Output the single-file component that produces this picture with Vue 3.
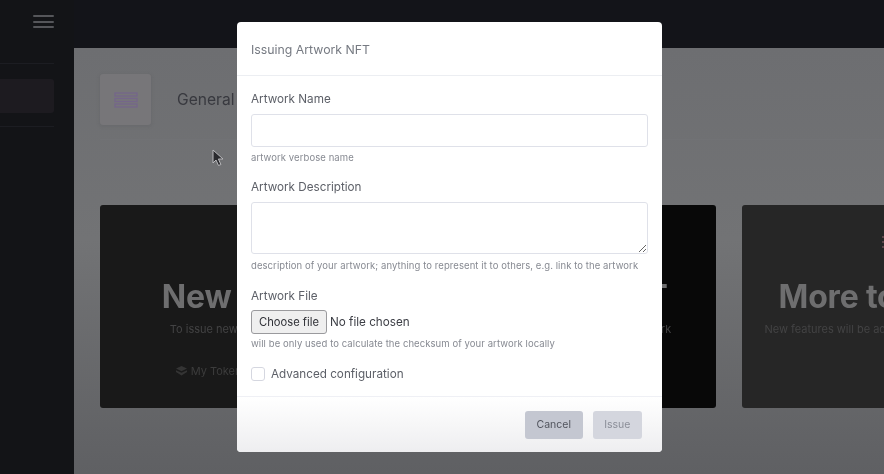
<script setup>
const cards = [
  { tone: 'tone-a', title: 'New Token', text: 'To issue new tokens for yours', link: 'My Tokens and Issuance' },
  { tone: 'tone-b', title: 'Artwork NFT', text: 'To issue an NFT of your unique artwork', link: 'My NFTs' },
  { tone: 'tone-c', title: 'More to come!', text: 'New features will be added here at a future date', link: '' }
]
</script>

<template>
  <div class="page">
    <aside class="sidebar">
      <div class="burger"><i></i><i></i><i></i></div>
      <div class="nav">
        <div class="nav-item"></div>
      </div>
    </aside>

    <div class="content">
      <header class="topbar"></header>
      <main class="main">
        <div class="title-row">
          <div class="tile">
            <svg width="24" height="16" viewBox="0 0 24 16" fill="none" stroke="#75668a" stroke-width="1.3">
              <rect x="1" y="1" width="22" height="3" />
              <rect x="1" y="6.5" width="22" height="3" />
              <rect x="1" y="12" width="22" height="3" />
            </svg>
          </div>
          <h1 class="title">General</h1>
        </div>
        <section class="cards">
          <article v-for="c in cards" :key="c.title" class="card" :class="c.tone">
            <svg class="card-icon" width="20" height="16" viewBox="0 0 20 16" fill="none" stroke="#5a4448" stroke-width="2">
              <path d="M2 3h16M2 8h16M2 13h16" />
            </svg>
            <h2 class="card-title">{{ c.title }}</h2>
            <p class="card-text">{{ c.text }}</p>
            <a v-if="c.link" class="card-link">
              <svg width="11" height="10" viewBox="0 0 11 10" fill="#343434"><path d="M5.5 0 11 2.6 5.5 5.2 0 2.6zM0 4.2l5.5 2.6L11 4.2V6L5.500 9.400 0 6z" /></svg>
              {{ c.link }}
            </a>
          </article>
        </section>
      </main>
    </div>

    <svg class="cursor" width="12" height="18" viewBox="0 0 12 18">
      <path d="M1 1v13l3-3 2.500 5.500 2.400-1L6.400 10H11z" fill="#2a2a2e" stroke="#b9b9bc" stroke-width="1" />
    </svg>

    <div class="modal">
      <div class="modal-head">Issuing Artwork NFT</div>
      <form class="modal-body" @submit.prevent>
        <div class="field name-field">
          <label class="label">Artwork Name</label>
          <input class="control name" type="text" />
          <small class="hint">artwork verbose name</small>
        </div>
        <div class="field desc-field">
          <label class="label">Artwork Description</label>
          <textarea class="control desc"></textarea>
          <small class="hint">description of your artwork; anything to represent it to others, e.g. link to the artwork</small>
        </div>
        <div class="field file-field">
          <label class="label">Artwork File</label>
          <div class="file-row">
            <button class="file-btn" type="button">Choose file</button>
            <span class="file-name">No file chosen</span>
          </div>
          <small class="hint">will be only used to calculate the checksum of your artwork locally</small>
        </div>
        <label class="check">
          <input class="box" type="checkbox" />
          <span>Advanced configuration</span>
        </label>
      </form>
      <div class="modal-foot">
        <button class="btn cancel" type="button">Cancel</button>
        <button class="btn issue" type="button" disabled>Issue</button>
      </div>
    </div>
  </div>
</template>

<style>
html, body { margin: 0; background: #131417; overflow: hidden; }
</style>

<style scoped>
* { box-sizing: border-box; }
.page {
  position: relative;
  display: flex;
  width: 884px;
  height: 474px;
  overflow: hidden;
  font-family: Inter, "Liberation Sans", sans-serif;
  background: #131417;
  filter: blur(0.45px);
}
.sidebar {
  flex: 0 0 74px;
  padding: 15px 20px 0 0;
  background: #131417;
}
.burger {
  display: flex;
  flex-direction: column;
  align-items: flex-end;
  gap: 3.5px;
  height: 48px;
}
.burger i {
  display: block;
  width: 21px;
  height: 2px;
  border-radius: 1px;
  background: #55565a;
}
.nav {
  border-top: 1px solid #1c1d22;
  border-bottom: 1px solid #1c1d22;
  padding: 15px 0 14px;
  height: 64px;
}
.nav-item {
  height: 34px;
  border-radius: 0 3px 3px 0;
  background: #1d1b20;
}
.content {
  flex: 1;
  min-width: 0;
  display: flex;
  flex-direction: column;
}
.topbar {
  flex: 0 0 48px;
  background: #131419;
}
.main {
  flex: 1;
  padding: 26px 0 0 26px;
  background: linear-gradient(#6d6e71, #727375 45%, #5f6063);
}
.title-row {
  display: flex;
  align-items: center;
  gap: 26px;
  padding-bottom: 14px;
  border-bottom: 1px solid #717275;
  margin-bottom: 65px;
}
.tile {
  width: 51px;
  height: 51px;
  display: flex;
  align-items: center;
  justify-content: center;
  border-radius: 3px;
  background: #777679;
  box-shadow: 0 1px 4px rgba(60, 60, 65, 0.15);
}
.title {
  margin: 0;
  font-size: 15.6px;
  font-weight: 400;
  color: #38393f;
}
.cards {
  display: flex;
  gap: 26px;
}
.card {
  flex: 0 0 295px;
  height: 203px;
  padding-top: 29px;
  border-radius: 3px;
  display: flex;
  flex-direction: column;
  align-items: center;
  text-align: center;
}
.tone-a { background: #191919; }
.tone-b { background: #080808; }
.tone-c { background: #262626; }
.card-icon { flex: none; }
.card-title {
  margin: 27px 0 0;
  font-size: 32px;
  line-height: 40px;
  font-weight: 700;
  letter-spacing: -0.2px;
  white-space: nowrap;
  color: #6e6e6f;
}
.card-text {
  margin: 4px 0 0;
  font-size: 11px;
  line-height: 16px;
  white-space: nowrap;
  color: #434344;
}
.card-link {
  margin-top: 26px;
  display: flex;
  align-items: center;
  gap: 4px;
  font-size: 11px;
  line-height: 16px;
  color: #3c3c3c;
}
.cursor {
  position: absolute;
  left: 212px;
  top: 149px;
}
.modal {
  position: absolute;
  left: 237px;
  top: 22px;
  width: 425px;
  height: 430px;
  display: flex;
  flex-direction: column;
  border-radius: 4px;
  overflow: hidden;
  background: #fff;
}
.modal-head {
  flex: 0 0 54px;
  padding: 20px 14px 0;
  font-size: 12.3px;
  line-height: 16px;
  color: #767a82;
  border-bottom: 1px solid #eceef2;
}
.modal-body {
  flex: 1;
  padding: 15px 14px 0;
  display: flex;
  flex-direction: column;
}
.field {
  display: flex;
  flex-direction: column;
  align-items: flex-start;
}
.label {
  font-size: 11.7px;
  line-height: 16px;
  color: #5d6068;
  margin-bottom: 7px;
}
.control {
  display: block;
  width: 100%;
  margin: 0;
  padding: 0 8px;
  border: 1px solid #dfe1e9;
  border-radius: 3px;
  background: #fff;
  outline: none;
}
.name { height: 33px; }
.desc { height: 52px; }
.hint {
  font-size: 9.5px;
  line-height: 12px;
  letter-spacing: 0.08px;
  color: #878a92;
  white-space: nowrap;
}
.name-field .hint { margin-top: 5px; }
.desc-field { margin-top: 15px; }
.desc-field .hint { margin-top: 6px; }
.file-field { margin-top: 16px; }
.file-field .label { margin-bottom: 6px; }
.file-field .hint { margin-top: 4px; }
.file-row {
  display: flex;
  align-items: center;
  gap: 3px;
  height: 24px;
}
.file-btn {
  width: 76px;
  height: 24px;
  padding: 0;
  border: 1px solid #9a9a9d;
  border-radius: 3px;
  background: #efefef;
  font-family: inherit;
  font-size: 11.2px;
  color: #2f3036;
}
.file-name {
  font-size: 11.7px;
  color: #3d3f46;
}
.check {
  margin-top: 16px;
  display: flex;
  align-items: center;
  gap: 6px;
  font-size: 11.7px;
  line-height: 16px;
  color: #5d6068;
}
.box {
  appearance: none;
  width: 14px;
  height: 14px;
  margin: 0;
  border: 1px solid #d5d7e0;
  border-radius: 3px;
  background: #fff;
}
.modal-foot {
  flex: 0 0 56px;
  display: flex;
  justify-content: flex-end;
  align-items: center;
  gap: 10.5px;
  padding: 0 20.5px 0 0;
  border-top: 1px solid #eff0f5;
  background: linear-gradient(#fff, #eeeef0);
}
.btn {
  height: 28px;
  padding: 0;
  border: 0;
  border-radius: 3px;
  font-family: inherit;
  font-size: 10.5px;
}
.cancel {
  width: 57.5px;
  background: #c4c7d1;
  color: #50535c;
}
.issue {
  width: 48.5px;
  background: #d4d6de;
  color: #8b8e98;
}
</style>
